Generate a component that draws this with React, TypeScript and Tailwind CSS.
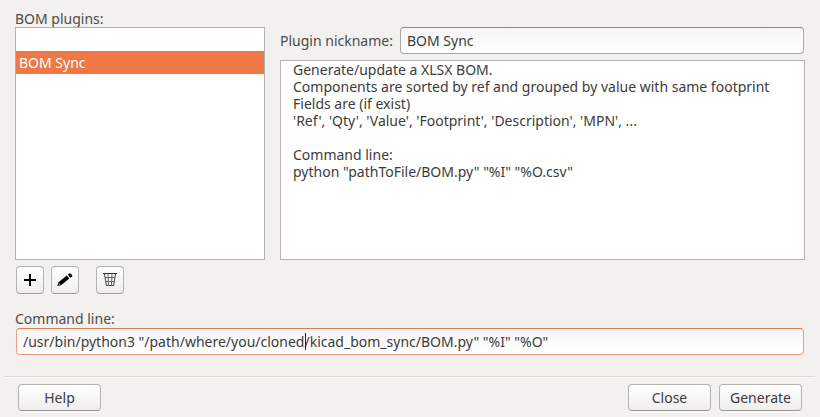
import { useState } from "react";

const plugins = ["", "BOM Sync"];

const description = `Generate/update a XLSX BOM.
Components are sorted by ref and grouped by value with same footprint
Fields are (if exist)
'Ref', 'Qty', 'Value', 'Footprint', 'Description', 'MPN', ...

Command line:
python "pathToFile/BOM.py" "%I" "%O.csv"`;

const buttonBase =
  "flex items-center justify-center rounded border border-[#b4b3b1] border-b-[#979694] bg-linear-to-b from-white to-[#efeeed] shadow-[0_1px_0_#fafafa]";

function PlusIcon() {
  return (
    <svg width="14" height="14" viewBox="0 0 14 14" aria-hidden="true">
      <path d="M7 1v12M1 7h12" stroke="#000" strokeWidth="2" />
    </svg>
  );
}

function PencilIcon() {
  return (
    <svg width="16" height="16" viewBox="0 0 16 16" aria-hidden="true">
      <path d="M0.4 14 1.2 10.4 9.8 3.4 12.3 6.6 4 13.2z" />
      <path d="M10.8 2.6 12.2 1.5Q13.1 .9 13.9 1.7L15.1 3.2Q15.7 4.1 14.9 4.7L13.2 5.8z" />
      <path d="M1.6 11.4 3.4 13" stroke="#fff" strokeWidth="0.8" />
    </svg>
  );
}

function TrashIcon() {
  return (
    <svg width="16" height="16" viewBox="0 0 16 16" fill="none" stroke="#666" aria-hidden="true">
      <path d="M1 1.5h14" stroke="#333" />
      <path d="M2.5 2 4.5 14M13.5 2 11.5 14M4.5 13.5h7" stroke="#444" />
      <path d="M6 2l.6 12M10 2l-.6 12M2.8 5.5h10.4M3.3 9.5h9.4" />
    </svg>
  );
}

export default function App() {
  const [selected, setSelected] = useState(1);
  const [nickname, setNickname] = useState("BOM Sync");
  const [command, setCommand] = useState(
    '/usr/bin/python3 "/path/where/you/cloned/kicad_bom_sync/BOM.py" "%I" "%O"',
  );

  return (
    <main className="flex min-h-screen flex-col bg-[#f2f1f0] px-[5px] pt-[10px] pb-[6px] font-['Noto_Sans',sans-serif] text-[14px] leading-[17px] text-[#3c3c3c]">
      <div className="flex gap-[15px] px-[10px]">
        <section className="flex w-[250px] shrink-0 flex-col">
          <h2 id="plugins-label" className="text-[#4c4c4c]">BOM plugins:</h2>
          <ul
            role="listbox"
            aria-labelledby="plugins-label"
            className="h-[233px] border border-[#b6b3ae] bg-white"
          >
            {plugins.map((name, i) => (
              <li
                key={i}
                role="option"
                aria-selected={i === selected}
                onClick={() => setSelected(i)}
                className={
                  i === selected
                    ? "flex h-[23px] items-center bg-[#f07746] px-[3px] text-white"
                    : "flex h-[23px] items-center px-[3px]"
                }
              >
                {name}
              </li>
            ))}
          </ul>
        </section>
        <section className="flex min-w-0 flex-1 flex-col gap-[6px] pt-[17px]">
          <div className="flex items-center gap-2 pr-px">
            <label htmlFor="nickname" className="w-[112px] shrink-0 whitespace-nowrap text-[#4c4c4c]">
              Plugin nickname:
            </label>
            <input
              id="nickname"
              value={nickname}
              onChange={(e) => setNickname(e.target.value)}
              className="h-[27px] min-w-0 flex-1 rounded border border-[#aaa9a7] border-t-[#8b8a88] bg-linear-to-b from-[#f5f5f5] to-white px-[6px] outline-none"
            />
          </div>
          <textarea
            aria-label="Plugin description"
            readOnly
            value={description}
            className="h-[200px] w-full resize-none border border-[#b6b3ae] bg-white px-3 outline-none"
          />
        </section>
      </div>

      <div className="flex px-[11px] pt-[6px]">
        <button type="button" aria-label="Add plugin" className={`${buttonBase} size-7`}>
          <PlusIcon />
        </button>
        <button type="button" aria-label="Edit plugin" className={`${buttonBase} ml-[7px] size-7`}>
          <PencilIcon />
        </button>
        <button type="button" aria-label="Remove plugin" className={`${buttonBase} ml-[17px] size-7`}>
          <TrashIcon />
        </button>
      </div>

      <div className="flex flex-col gap-px px-[10px] pt-4">
        <label htmlFor="command" className="text-[#4c4c4c]">Command line:</label>
        <div className="relative flex px-px">
          <input
            id="command"
            value={command}
            onChange={(e) => setCommand(e.target.value)}
            className="h-[27px] min-w-0 flex-1 rounded border border-[#e9a080] border-t-[#dc7d55] bg-linear-to-b from-[#f5f5f5] to-white px-[6px] outline-none"
          />
          <span className="absolute top-[5px] left-[290px] h-[17px] w-px bg-[#222]" />
        </div>
      </div>

      <footer className="mt-[21px] flex justify-between border-t border-[#d9d7d5] px-[13px] pt-[7px] shadow-[inset_0_1px_0_#fafafa]">
        <button type="button" className={`${buttonBase} h-[27px] w-[83px]`}>Help</button>
        <div className="flex gap-2">
          <button type="button" className={`${buttonBase} h-[27px] w-[83px]`}>Close</button>
          <button type="button" className={`${buttonBase} h-[27px] w-[83px]`}>Generate</button>
        </div>
      </footer>
    </main>
  );
}
